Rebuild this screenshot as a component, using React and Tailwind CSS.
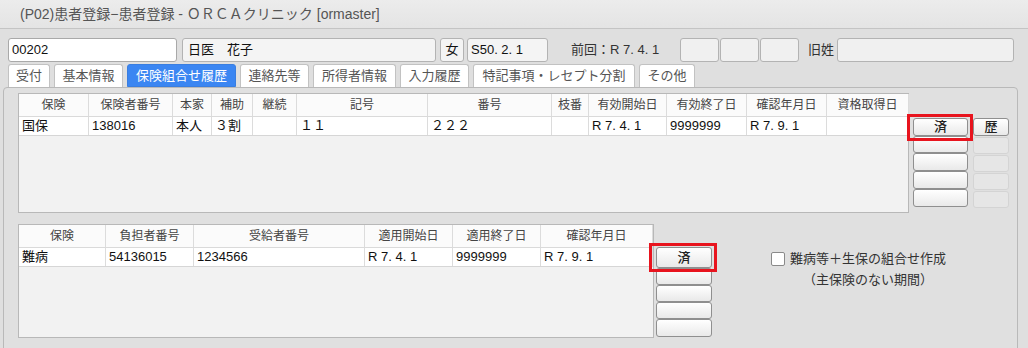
import React from "react";

const font = { fontFamily: '"Liberation Sans", "Noto Sans CJK JP", sans-serif' };

const upperCols = [
  { label: "保険", w: 70, v: "国保" },
  { label: "保険者番号", w: 84, v: "138016" },
  { label: "本家", w: 39, v: "本人" },
  { label: "補助", w: 41, v: "３割" },
  { label: "継続", w: 44, v: "" },
  { label: "記号", w: 131, v: "１１" },
  { label: "番号", w: 124, v: "２２２" },
  { label: "枝番", w: 37, v: "" },
  { label: "有効開始日", w: 78, v: "R 7. 4. 1" },
  { label: "有効終了日", w: 80, v: "9999999" },
  { label: "確認年月日", w: 80, v: "R 7. 9. 1" },
  { label: "資格取得日", w: 82, v: "" },
];

const lowerCols = [
  { label: "保険", w: 87, v: "難病" },
  { label: "負担者番号", w: 88, v: "54136015" },
  { label: "受給者番号", w: 171, v: "1234566" },
  { label: "適用開始日", w: 88, v: "R 7. 4. 1" },
  { label: "適用終了日", w: 88, v: "9999999" },
  { label: "確認年月日", w: 112, v: "R 7. 9. 1" },
];

const tabs = [
  { label: "受付", w: 42 },
  { label: "基本情報", w: 69 },
  { label: "保険組合せ履歴", w: 109, active: true },
  { label: "連絡先等", w: 69 },
  { label: "所得者情報", w: 83 },
  { label: "入力履歴", w: 69 },
  { label: "特記事項・レセプト分割", w: 162 },
  { label: "その他", w: 56 },
];

function Table({ cols, width, height }) {
  return (
    <div
      className="flex flex-col border border-[#b8b8b8] bg-[#f2f2f2]"
      style={{ width, height }}
    >
      <div className="flex h-[23px] bg-[#fbfbfb] border-b border-[#dadada]">
        {cols.map((c, i) => (
          <div
            key={i}
            className="flex items-center justify-center text-[12px] text-[#444] border-r border-[#dcdcdc] shrink-0"
            style={{ width: c.w }}
          >
            {c.label}
          </div>
        ))}
      </div>
      <div className="flex h-[19px] bg-white border-b border-[#d6d6d6]">
        {cols.map((c, i) => (
          <div
            key={i}
            className="flex items-center pl-[3px] text-[13px] text-[#111] border-r border-[#dcdcdc] shrink-0 whitespace-nowrap"
            style={{ width: c.w }}
          >
            {c.v}
          </div>
        ))}
      </div>
    </div>
  );
}

function Btn({ children, h, w }) {
  return (
    <div
      className="flex items-center justify-center rounded-[3px] border border-[#8f8f8f] bg-gradient-to-b from-white to-[#e9e9e9] text-[13px] text-[#222] font-medium shrink-0"
      style={{ height: h, width: w }}
    >
      {children}
    </div>
  );
}

function App() {
  return (
    <div
      className="w-[1028px] h-[348px] overflow-hidden bg-[#dfdfdf] text-[#111]"
      style={font}
    >
      {/* TITLE */}
      <div className="h-[29px] flex items-center pl-[20px] bg-gradient-to-b from-[#ececec] to-[#e4e4e4] border-b border-[#c4c4c4] text-[14px] text-[#555]">
        (P02)患者登録−患者登録 - ＯＲＣＡクリニック [ormaster]
      </div>

      {/* PATIENT ROW */}
      <div className="flex items-center h-[24px] mt-[9px] pl-[8px] text-[13px]">
        <div className="w-[169px] h-full flex items-center pl-[3px] bg-white border border-[#a9a9a9] rounded-[3px]">
          00202
        </div>
        <div className="w-[254px] h-full ml-[5px] flex items-center pl-[5px] bg-[#f4f4f4] border border-[#b3b3b3] rounded-[3px]">
          日医　花子
        </div>
        <div className="w-[24px] h-full ml-[4px] flex items-center justify-center bg-[#f4f4f4] border border-[#b3b3b3] rounded-[3px]">
          女
        </div>
        <div className="w-[81px] h-full ml-[3px] flex items-center pl-[3px] bg-[#f4f4f4] border border-[#b3b3b3] rounded-[3px]">
          S50. 2. 1
        </div>
        <div className="ml-[23px] w-[109px] text-[13px] text-[#333]">前回：R 7. 4. 1</div>
        <div className="w-[39px] h-full bg-[#f0f0f0] border border-[#b3b3b3] rounded-[3px]" />
        <div className="w-[39px] h-full ml-[1px] bg-[#f0f0f0] border border-[#b3b3b3] rounded-[3px]" />
        <div className="w-[39px] h-full ml-[1px] bg-[#f0f0f0] border border-[#b3b3b3] rounded-[3px]" />
        <div className="ml-[9px] w-[29px] text-[#333]">旧姓</div>
        <div className="w-[177px] h-full bg-[#f0f0f0] border border-[#b3b3b3] rounded-[3px]" />
      </div>

      {/* TABS */}
      <div className="flex h-[23px] mt-[2px] pl-[8px] gap-[4px]">
        {tabs.map((t) => (
          <div
            key={t.label}
            className={
              t.active
                ? "flex items-center justify-center rounded-t-[3px] bg-[#3b86f2] border border-[#3a7ee0] text-white text-[13px]"
                : "flex items-center justify-center rounded-t-[3px] bg-white border border-[#c2c2c2] border-b-0 text-[#555] text-[13px]"
            }
            style={{ width: t.w }}
          >
            {t.label}
          </div>
        ))}
      </div>

      {/* PANEL */}
      <div className="ml-[3px] w-[1015px] h-[270px] border border-[#b9b9b9] rounded-[4px] bg-[#e0e0e0] pl-[14px] pt-[5px]">
        {/* UPPER */}
        <div className="flex">
          <Table cols={upperCols} width={891} height={120} />
          <div className="relative flex flex-col ml-[4px] pt-[25px]">
            <div className="absolute left-[-6px] top-[21px] w-[66px] h-[27px] border-[3px] border-[#e8141e]" />
            <Btn h={18} w={55}>済</Btn>
            <Btn h={17} w={55}></Btn>
            <Btn h={18} w={55}></Btn>
            <Btn h={18} w={55}></Btn>
            <Btn h={18} w={55}></Btn>
          </div>
          <div className="flex flex-col ml-[5px] pt-[25px]">
            <Btn h={18} w={36}>歴</Btn>
            {[0, 1, 2, 3].map((i) => (
              <div
                key={i}
                className="h-[17px] w-[36px] mt-[1px] rounded-[3px] border border-[#d4d4d4] bg-[#e6e6e6]"
              />
            ))}
          </div>
        </div>

        {/* LOWER */}
        <div className="flex mt-[11px]">
          <Table cols={lowerCols} width={636} height={114} />
          <div className="relative flex flex-col ml-[2px] pt-[23px]">
            <div className="absolute left-[-7px] top-[19px] w-[68px] h-[29px] border-[3px] border-[#e8141e]" />
            <Btn h={21} w={56}>済</Btn>
            <Btn h={17} w={56}></Btn>
            <Btn h={17} w={56}></Btn>
            <Btn h={17} w={56}></Btn>
            <Btn h={18} w={56}></Btn>
          </div>
          <div className="flex flex-col ml-[59px] pt-[25px] text-[13px] text-[#333]">
            <div className="flex items-center">
              <div className="w-[14px] h-[14px] bg-white border border-[#8a8a8a] rounded-[2px]" />
              <span className="ml-[5px]">難病等＋生保の組合せ作成</span>
            </div>
            <div className="ml-[19px] text-center w-[156px] mt-[1px]">（主保険のない期間）</div>
          </div>
        </div>
      </div>
    </div>
  );
}

export default App;
